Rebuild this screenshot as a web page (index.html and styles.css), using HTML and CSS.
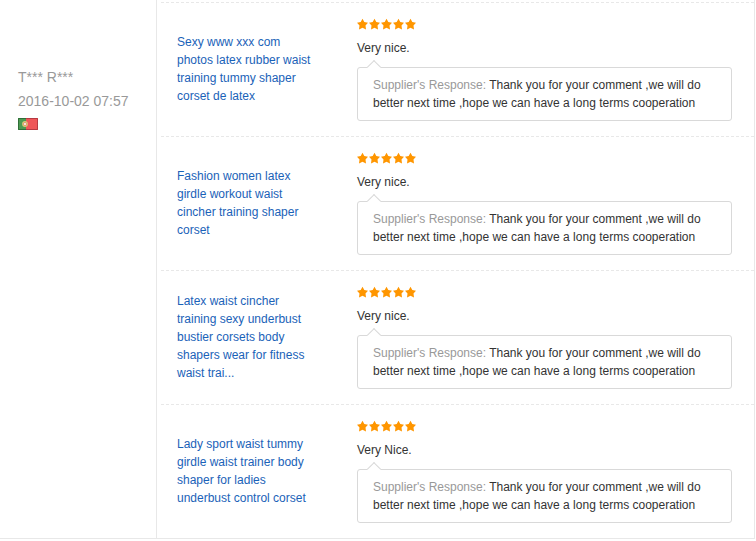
FILE: index.html
```
<!DOCTYPE html>
<html lang="en">
<head>
    <meta charset="UTF-8">
    <meta name="viewport" content="width=device-width, initial-scale=1.0">
    <title>Buyer Feedback</title>
    <link rel="stylesheet" href="styles.css">
</head>
<body>
    <svg class="sprite" width="0" height="0">
        <symbol id="stars" viewBox="0 0 60 12">
            <path id="star" d="M5.5 0.8 L7.3 4.1 L11 4.8 L8.5 7.5 L9 11.4 L5.5 9.8 L2 11.4 L2.5 7.5 L0 4.8 L3.7 4.1 Z"/>
            <use href="#star" x="12"/>
            <use href="#star" x="24"/>
            <use href="#star" x="36"/>
            <use href="#star" x="48"/>
        </symbol>
    </svg>

    <div class="feedback">
        <div class="buyer">
            <div>T*** R***</div>
            <div>2016-10-02 07:57</div>
            <svg class="flag" viewBox="0 0 20 12" role="img" aria-label="Portugal">
                <rect width="20" height="12" fill="#ef5658"/>
                <rect width="8" height="12" fill="#4d9a52"/>
                <circle cx="7" cy="6" r="2.9" fill="#d8c878"/>
                <circle cx="7" cy="6" r="1.7" fill="#e8806f"/>
                <circle cx="7" cy="6" r="1" fill="#fff"/>
                <path d="M8 0.5 H19.5 V11.5 H8" fill="none" stroke="#b53a42"/>
                <path d="M8 0.5 H0.5 V11.5 H8" fill="none" stroke="#2f6f38"/>
            </svg>
        </div>

        <div class="orders">
            <div class="order">
                <div class="product"><a href="#">Sexy www xxx com photos latex rubber waist training tummy shaper corset de latex</a></div>
                <div class="review">
                    <svg class="stars" role="img" aria-label="5 stars"><use href="#stars"/></svg>
                    <p class="comment">Very nice.</p>
                    <div class="response"><span>Supplier's Response:</span> Thank you for your comment ,we will do better next time ,hope we can have a long terms cooperation</div>
                </div>
            </div>
            <div class="order">
                <div class="product"><a href="#">Fashion women latex girdle workout waist cincher training shaper corset</a></div>
                <div class="review">
                    <svg class="stars" role="img" aria-label="5 stars"><use href="#stars"/></svg>
                    <p class="comment">Very nice.</p>
                    <div class="response"><span>Supplier's Response:</span> Thank you for your comment ,we will do better next time ,hope we can have a long terms cooperation</div>
                </div>
            </div>
            <div class="order">
                <div class="product"><a href="#">Latex waist cincher training sexy underbust bustier corsets body shapers wear for fitness waist trai...</a></div>
                <div class="review">
                    <svg class="stars" role="img" aria-label="5 stars"><use href="#stars"/></svg>
                    <p class="comment">Very nice.</p>
                    <div class="response"><span>Supplier's Response:</span> Thank you for your comment ,we will do better next time ,hope we can have a long terms cooperation</div>
                </div>
            </div>
            <div class="order">
                <div class="product"><a href="#">Lady sport waist tummy girdle waist trainer body shaper for ladies underbust control corset</a></div>
                <div class="review">
                    <svg class="stars" role="img" aria-label="5 stars"><use href="#stars"/></svg>
                    <p class="comment">Very Nice.</p>
                    <div class="response"><span>Supplier's Response:</span> Thank you for your comment ,we will do better next time ,hope we can have a long terms cooperation</div>
                </div>
            </div>
        </div>
    </div>
</body>
</html>
```
FILE: styles.css
```
body {
    margin: 0;
    background: #fff;
    color: #333;
    font-family: "Liberation Sans", Arial, sans-serif;
    font-size: 12px;
    line-height: 18px;
}
.sprite {
    position: absolute;
}
.feedback {
    display: flex;
    margin-right: 1px;
    border-right: 1px solid #e8e8e8;
    border-bottom: 1px solid #e8e8e8;
}
.buyer {
    flex: 0 0 156px;
    box-sizing: border-box;
    padding: 65px 0 0 18px;
    color: #999;
    font-size: 14px;
    line-height: 24px;
}
.flag {
    display: block;
    width: 20px;
    height: 12px;
    margin-top: 5px;
}
.orders {
    flex: 1;
    padding: 2px 0 0 4px;
    border-left: 1px solid #e8e8e8;
}
.order {
    display: flex;
    border-top: 1px dashed #e8e8e8;
}
.product {
    flex: 0 0 180px;
    box-sizing: border-box;
    display: flex;
    align-items: center;
    padding: 0 24px 2px 16px;
}
.product a {
    color: #1a62b8;
    text-decoration: none;
}
.product a:hover {
    text-decoration: underline;
}
.review {
    flex: 1;
    padding: 15px 22px 15px 16px;
}
.stars {
    display: block;
    width: 60px;
    height: 12px;
    margin-bottom: 9px;
    fill: #ff9600;
}
.comment {
    margin: 0 0 10px;
}
.response {
    position: relative;
    padding: 8px 15px;
    border: 1px solid #d9d9d9;
    border-radius: 3px;
}
.response span {
    color: #999;
}
/* little pointer on top of the bubble */
.response::before {
    content: "";
    position: absolute;
    top: -6px;
    left: 11px;
    width: 9px;
    height: 9px;
    background: #fff;
    border-top: 1px solid #d9d9d9;
    border-left: 1px solid #d9d9d9;
    transform: rotate(45deg);
}
```
